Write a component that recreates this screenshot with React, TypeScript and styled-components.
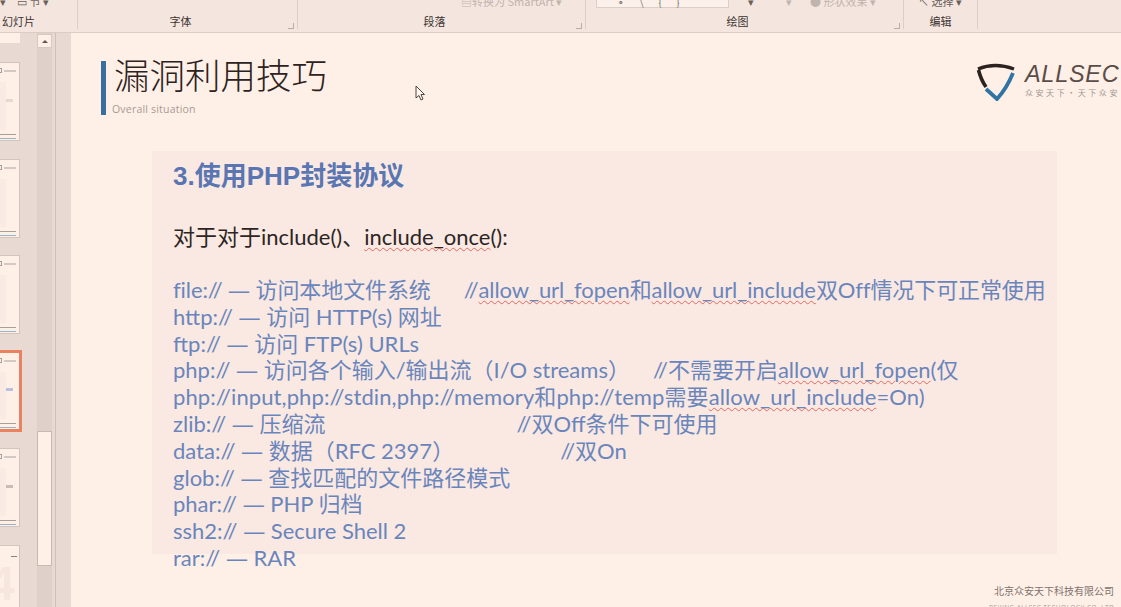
import { FC, ReactNode } from 'react';
import styled, { createGlobalStyle } from 'styled-components';

const SANS = `Lato, "Noto Sans CJK SC", sans-serif`;
const CJK = `"Noto Sans CJK SC", "Noto Sans", sans-serif`;

const GlobalStyle = createGlobalStyle`
    html, body {
        margin: 0;
        padding: 0;
        height: 607px;
        overflow: hidden;
        background: #fff0e7;
    }
`;

const Page = styled.div`
    position: relative;
    width: 1121px;
    height: 607px;
    display: flex;
    flex-direction: column;
    overflow: hidden;
    font-family: ${SANS};
`;

/* ribbon */
const Ribbon = styled.div`
    height: 32px;
    flex: none;
    display: flex;
    background: #f4e6df;
    border-bottom: 1px solid #d9cdc6;
`;

const Group = styled.div<{ $width: number; $lead: number; $trail: number }>`
    width: ${p => p.$width}px;
    height: 29px;
    flex: none;
    position: relative;
    display: flex;
    flex-direction: column;
    justify-content: space-between;
    margin-left: ${p => -p.$lead}px;
    padding-right: ${p => p.$trail}px;
    border-right: 1px solid #dccfc8;
    box-sizing: border-box;
`;

const GroupTools = styled.div<{ $pad: number }>`
    height: 8px;
    display: flex;
    align-items: flex-end;
    padding-left: ${p => p.$pad}px;
    overflow: hidden;
    font: 11px/14px ${CJK};
    color: #6a5f5a;
    white-space: nowrap;
`;

const GroupLabel = styled.div`
    text-align: center;
    font: 11px/14px ${CJK};
    color: #3b3331;
    margin-bottom: 1px;
`;

const Tool = styled.span<{ $gap?: number }>`
    margin-left: ${p => p.$gap ?? 0}px;
`;

const Muted = styled(Tool)`
    color: #c0b4ae;
`;

const Launcher = styled.span`
    position: absolute;
    right: 3px;
    bottom: 0;
    width: 5px;
    height: 5px;
    border-right: 1px solid #b9aea8;
    border-bottom: 1px solid #b9aea8;
`;

const ShapeBox = styled.div`
    width: 133px;
    height: 9px;
    flex: none;
    display: flex;
    gap: 15px;
    padding-left: 20px;
    box-sizing: border-box;
    border: 1px solid #dccfc8;
    border-top: none;
    background: #fbf0ea;
    font: 9px/8px ${CJK};
`;

/* main area */
const Main = styled.div`
    flex: 1;
    min-height: 0;
    display: flex;
`;

const Sidebar = styled.div`
    width: 71px;
    flex: none;
    display: flex;
    background: #e8dad2;
`;

const Thumbs = styled.div`
    width: 37px;
    flex: none;
    display: flex;
    flex-direction: column;
    align-items: flex-end;
    overflow: hidden;
`;

const TopStub = styled.div`
    width: 20px;
    height: 10px;
    flex: none;
    align-self: flex-start;
    background: #fff0e7;
`;

const Thumb = styled.div<{ $active?: boolean; $top: number }>`
    flex: none;
    box-sizing: border-box;
    width: ${p => (p.$active ? 140 : 137)}px;
    height: ${p => (p.$active ? 82 : 79)}px;
    margin-top: ${p => p.$top}px;
    margin-right: ${p => (p.$active ? 15 : 17)}px;
    background: #fff0e7;
    border: ${p => (p.$active ? '3px solid #ea8262' : '1px solid #d2c5be')};
    display: flex;
    flex-direction: column;
    justify-content: space-between;
    align-items: flex-end;
    padding: 5px 2px 1px 0;
    filter: blur(0.5px);
`;

const ThumbLogo = styled.div`
    display: flex;
    align-items: center;
    gap: 2px;
    padding-right: 1px;
`;

const ThumbMark = styled.span`
    width: 3px;
    height: 3px;
    border: 1px solid #a89f9a;
`;

const ThumbName = styled.span`
    width: 12px;
    height: 2px;
    background: #d3c8c3;
`;

const ThumbPanel = styled.div`
    flex: 1;
    align-self: stretch;
    margin: 9px 11px 4px 0;
    background: #f9ebe4;
    position: relative;
`;

const ThumbFoot = styled.div`
    width: 17px;
    height: 3px;
    margin-right: 1px;
    border-top: 1px solid #a89f9a;
    border-bottom: 1px solid #9fb2c4;
`;

const ThumbHint = styled.span<{ $color: string }>`
    position: absolute;
    right: -7px;
    top: 35%;
    width: 7px;
    height: 3px;
    background: ${p => p.$color};
`;

const BigFour = styled.div`
    flex: none;
    margin-top: 18px;
    margin-right: 17px;
    width: 137px;
    height: 70px;
    box-sizing: border-box;
    background: #fff0e7;
    border: 1px solid #d2c5be;
    position: relative;
    overflow: hidden;
    filter: blur(0.5px);
`;

const BigFourDigit = styled.span`
    position: absolute;
    right: 4px;
    top: 14px;
    font: 700 48px/1 "Liberation Sans", sans-serif;
    color: #f6e6de;
`;

const BigFourTab = styled.span`
    position: absolute;
    right: 0;
    bottom: 0;
    width: 12px;
    height: 4px;
    background: #a9bfd2;
`;

const BigFourDash = styled.span`
    position: absolute;
    right: 2px;
    top: 10px;
    width: 6px;
    height: 1px;
    background: #8a8280;
`;

const Scrollbar = styled.div`
    width: 15px;
    flex: none;
    display: flex;
    flex-direction: column;
    background: #dfd1c9;
`;

const ScrollUp = styled.div`
    height: 14px;
    margin-top: 1px;
    box-sizing: border-box;
    background: #fff0e7;
    border: 1px solid #d6c9c2;
    display: flex;
    align-items: center;
    justify-content: center;
`;

const ArrowUp = styled.span`
    width: 0;
    height: 0;
    border-left: 3px solid transparent;
    border-right: 3px solid transparent;
    border-bottom: 3px solid #5f5551;
`;

const ScrollThumb = styled.div`
    height: 135px;
    margin-top: 383px;
    box-sizing: border-box;
    background: #fff0e7;
    border: 1px solid #c7bab3;
`;

const PaneGap = styled.div`
    width: 19px;
    flex: none;
    box-sizing: border-box;
    padding-left: 3px;
`;

const PaneLine = styled.div`
    height: 100%;
    width: 15px;
    border-left: 1px solid #cfc2bb;
`;

/* slide */
const Slide = styled.div`
    flex: 1;
    min-width: 0;
    display: flex;
    flex-direction: column;
    background: #fff0e7;
    padding-top: 28px;
    overflow: hidden;
`;

const Header = styled.div`
    height: 54px;
    flex: none;
    display: flex;
    justify-content: space-between;
    padding-left: 30px;
`;

const TitleBlock = styled.div`
    display: flex;
    flex-direction: column;
    border-left: 5px solid #3b6f9b;
    padding-left: 8px;
`;

const Title = styled.h1`
    margin: -9px 0 0;
    font: 300 35.5px/44px ${CJK};
    color: #2c2220;
`;

const Subtitle = styled.div`
    margin: 6px 0 0 -2px;
    font: 10.5px/14px "Open Sans", sans-serif;
    letter-spacing: 0.2px;
    color: #a69a94;
`;

const Logo = styled.div`
    display: flex;
    align-items: flex-start;
    gap: 9px;
    width: 145px;
    flex: none;
    white-space: nowrap;
`;

const LogoText = styled.div`
    display: flex;
    flex-direction: column;
`;

const LogoName = styled.div`
    font: italic 400 23.5px/25px "Liberation Sans", sans-serif;
    letter-spacing: 0.7px;
    color: #5a4d48;
    margin-top: 1px;
`;

const LogoTag = styled.div`
    font: 8px/10px ${CJK};
    letter-spacing: 2.55px;
    color: #a09590;
    margin-top: 1px;
`;

const Panel = styled.div`
    margin: 36px 0 0 81px;
    width: 905px;
    height: 403px;
    flex: none;
    box-sizing: border-box;
    padding: 8px 0 0 21px;
    background: #f9e9e2;
`;

const Heading = styled.h2`
    margin: 0;
    font: 700 26px/34px "Liberation Sans", "Noto Sans CJK SC", sans-serif;
    color: #5a76b2;
`;

const Intro = styled.div`
    margin-top: 29px;
    font: 400 22px/30px ${SANS};
    color: #2d2524;
    white-space: pre;
`;

const Lines = styled.div`
    margin-top: 25px;
`;

const Line = styled.div<{ $track?: number }>`
    font: 400 22px/26.8px ${SANS};
    letter-spacing: ${p => p.$track ?? 0}px;
    color: #6a85bc;
    white-space: pre;
`;

const Dash = styled.span`
    font-family: "Open Sans", sans-serif;
    line-height: 0;
`;

const Typo = styled.span`
    text-decoration: underline wavy #e06a60 1px;
    text-underline-offset: 2px;
`;

const Note = styled.span<{ $gap: number }>`
    margin-left: ${p => p.$gap}px;
`;

const Footer = styled.div`
    margin-top: 30px;
    align-self: flex-end;
    padding-right: 7px;
    text-align: right;
`;

const FooterName = styled.div`
    font: 10px/14px ${CJK};
    color: #7d716d;
`;

const FooterEnglish = styled.div`
    font: 6.5px/9px "Open Sans", sans-serif;
    letter-spacing: 0.4px;
    color: #a89d98;
    margin-top: 5px;
`;

const Pointer = styled.svg`
    position: absolute;
    left: 415px;
    top: 85px;
`;

const ShieldLogo: FC = () => (
    <svg width="40" height="40" viewBox="0 0 40 40" style={{ flex: 'none' }}>
        <path d="M2 8 Q19 1 38 8" fill="none" stroke="#2c2220" strokeWidth="3.4" />
        <path d="M2.5 9 Q5 19 10 26" fill="none" stroke="#2c2220" strokeWidth="3.6" />
        <path d="M37 12 Q31 27 21 38 L10 28" fill="none" stroke="#2f74a4" strokeWidth="3.8" />
    </svg>
);

const SlideThumb: FC<{ top: number; active?: boolean; hint?: string }> = ({ top, active, hint }) => (
    <Thumb $top={top} $active={active}>
        <ThumbLogo><ThumbMark /><ThumbName /></ThumbLogo>
        <ThumbPanel>{hint && <ThumbHint $color={hint} />}</ThumbPanel>
        <ThumbFoot />
    </Thumb>
);

const RibbonGroup: FC<{ width: number; lead?: number; trail?: number; label?: string; launcher?: boolean; pad?: number; children?: ReactNode }> = ({ width, lead = 0, trail = 14, label, launcher, pad = 0, children }) => (
    <Group $width={width} $lead={lead} $trail={trail}>
        <GroupTools $pad={pad}>{children}</GroupTools>
        <GroupLabel>{label}</GroupLabel>
        {launcher && <Launcher />}
    </Group>
);

export default function App() {
    return (
        <>
            <GlobalStyle />
            <Page>
                <Ribbon>
                    <RibbonGroup width={118} lead={40} trail={0} label="幻灯片" pad={40}>
                        <Tool>▾</Tool>
                        <Tool $gap={11}>▭ 节 ▾</Tool>
                    </RibbonGroup>
                    <RibbonGroup width={220} label="字体" launcher />
                    <RibbonGroup width={288} label="段落" launcher pad={163}><Muted>▤转换为 SmartArt ▾</Muted></RibbonGroup>
                    <RibbonGroup width={318} label="绘图" launcher pad={10}>
                        <ShapeBox><span>⚬</span><span>\</span><span>{'{'}</span><span>{'}'}</span></ShapeBox>
                        <Tool $gap={19}>▾</Tool>
                        <Muted $gap={32}>▾</Muted>
                        <Muted $gap={18}>● 形状效果 ▾</Muted>
                    </RibbonGroup>
                    <RibbonGroup width={74} trail={0} label="编辑" pad={14}>
                        <Tool>↖ 选择 ▾</Tool>
                    </RibbonGroup>
                </Ribbon>
                <Main>
                    <Sidebar>
                        <Thumbs>
                            <TopStub />
                            <SlideThumb top={19} hint="#e8d6d0" />
                            <SlideThumb top={18} />
                            <SlideThumb top={17} />
                            <SlideThumb top={16} active hint="#b9bfdc" />
                            <SlideThumb top={16} hint="#c9bdb8" />
                            <BigFour>
                                <BigFourDash />
                                <BigFourDigit>4</BigFourDigit>
                                <BigFourTab />
                            </BigFour>
                        </Thumbs>
                        <Scrollbar>
                            <ScrollUp><ArrowUp /></ScrollUp>
                            <ScrollThumb />
                        </Scrollbar>
                        <PaneGap><PaneLine /></PaneGap>
                    </Sidebar>
                    <Slide>
                        <Header>
                            <TitleBlock>
                                <Title>漏洞利用技巧</Title>
                                <Subtitle>Overall situation</Subtitle>
                            </TitleBlock>
                            <Logo>
                                <ShieldLogo />
                                <LogoText>
                                    <LogoName>ALLSEC</LogoName>
                                    <LogoTag>众安天下·天下众安</LogoTag>
                                </LogoText>
                            </Logo>
                        </Header>
                        <Panel>
                            <Heading>3.使用PHP封装协议</Heading>
                            <Intro>对于对于include()、<Typo>include_once</Typo>():</Intro>
                            <Lines>
                                <Line $track={-0.1}>file:// <Dash>—</Dash> 访问本地文件系统<Note $gap={33}>//<Typo>allow_url_fopen</Typo>和<Typo>allow_url_include</Typo>双Off情况下可正常使用</Note></Line>
                                <Line>http:// <Dash>—</Dash> 访问 HTTP(s) 网址</Line>
                                <Line>ftp:// <Dash>—</Dash> 访问 FTP(s) URLs</Line>
                                <Line>php:// <Dash>—</Dash> 访问各个输入/输出流（I/O streams）<Note $gap={23}>//不需要开启<Typo>allow_url_fopen</Typo>(仅</Note></Line>
                                <Line $track={0.1}>php://input,php://stdin,php://memory和php://temp需要<Typo>allow_url_include</Typo>=On)</Line>
                                <Line>zlib:// <Dash>—</Dash> 压缩流<Note $gap={191}>//双Off条件下可使用</Note></Line>
                                <Line>data:// <Dash>—</Dash> 数据（RFC 2397）<Note $gap={106}>//双On</Note></Line>
                                <Line>glob:// <Dash>—</Dash> 查找匹配的文件路径模式</Line>
                                <Line>phar:// <Dash>—</Dash> PHP 归档</Line>
                                <Line>ssh2:// <Dash>—</Dash> Secure Shell 2</Line>
                                <Line>rar:// <Dash>—</Dash> RAR</Line>
                            </Lines>
                        </Panel>
                        <Footer>
                            <FooterName>北京众安天下科技有限公司</FooterName>
                            <FooterEnglish>BEIJING ALLSEC TECHOLOGY CO.,LTD</FooterEnglish>
                        </Footer>
                    </Slide>
                </Main>
                <Pointer width="11" height="17" viewBox="0 0 11 17">
                    <path d="M1 1 L1 13 L4 10.5 L6 15 L8 14 L6 9.5 L9.5 9.5 Z" fill="#fff6f0" stroke="#3a3230" strokeWidth="0.9" />
                </Pointer>
            </Page>
        </>
    );
}
